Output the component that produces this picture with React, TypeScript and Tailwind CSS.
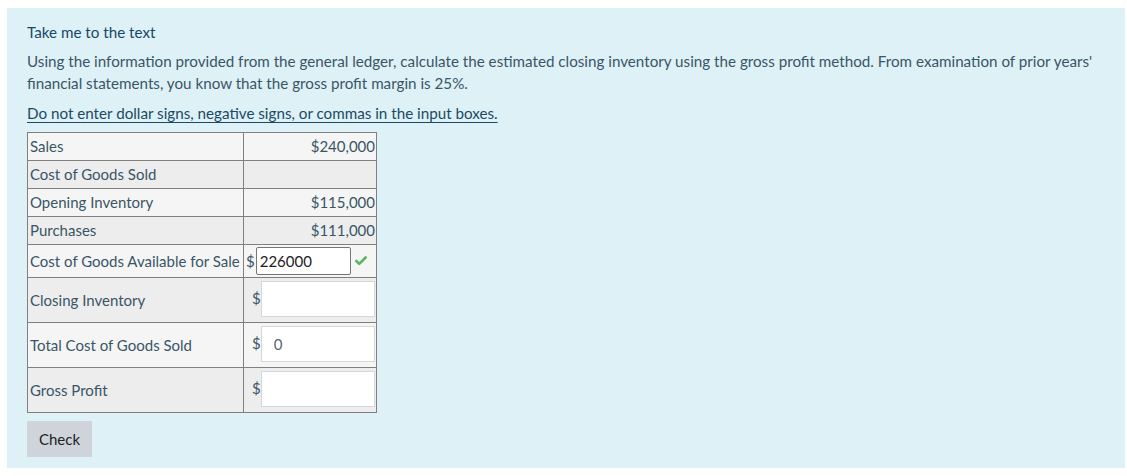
import { Check } from 'lucide-react'

const font = { fontFamily: '"Lato", "Open Sans", sans-serif' }

type Row = { label: string; value?: string; kind?: 'text' | 'filled' | 'input'; input?: string }

const rows: Row[] = [
  { label: 'Sales', value: '$240,000' },
  { label: 'Cost of Goods Sold', value: '' },
  { label: 'Opening Inventory', value: '$115,000' },
  { label: 'Purchases', value: '$111,000' },
  { label: 'Cost of Goods Available for Sale', kind: 'filled', input: '226000' },
  { label: 'Closing Inventory', kind: 'input', input: '' },
  { label: 'Total Cost of Goods Sold', kind: 'input', input: '0' },
  { label: 'Gross Profit', kind: 'input', input: '' },
]

function ValueCell({ row }: { row: Row }) {
  if (row.kind === 'filled') {
    return (
      <div className="flex items-center h-[32px] pl-[2px]">
        <span>$</span>
        <input
          readOnly
          value={row.input}
          className="ml-px w-[95px] h-[28px] border border-[#767676] rounded-[2px] bg-white px-[3px] text-[15px] text-[#1d2125] outline-none"
        />
        <Check className="ml-[3px] w-[14px] h-[14px] text-[#5cb85c]" strokeWidth={4.5} />
      </div>
    )
  }
  if (row.kind === 'input') {
    return (
      <div className="flex items-center h-[44px] pl-[8px] pb-[3px]">
        <span>$</span>
        <input
          readOnly
          value={row.input}
          className="w-[114px] h-[36px] border border-[#d4d8dc] bg-white px-[12px] text-[15px] text-[#5a6570] outline-none"
        />
      </div>
    )
  }
  return <div className="h-[27px] flex items-center justify-end pr-[1px]">{row.value}</div>
}

export default function App() {
  return (
    <div className="pt-2 pl-[7px] pr-[2px] bg-white h-[476px]" style={font}>
      <div className="bg-[#def1f7] h-[460px] pl-5 pt-[13px] text-[15.2px] text-[#3a5566]">
        <p className="leading-[22px] text-[#174766]">Take me to the text</p>
        <p className="mt-[7px] leading-[22px] pr-6">
          Using the information provided from the general ledger, calculate the estimated closing inventory using the gross profit method. From examination of prior years' financial statements, you know that the gross profit margin is 25%.
        </p>
        <p className="mt-[8px] leading-[22px] underline underline-offset-[3px] text-[#1a4a63]">
          Do not enter dollar signs, negative signs, or commas in the input boxes.
        </p>
        <table className="mt-[8px] border-collapse border border-[#808080] text-[#3a5566] text-[15px] table-fixed w-[349px]">
          <colgroup>
            <col className="w-[216px]" />
            <col className="w-[133px]" />
          </colgroup>
          <tbody>
            {rows.map((row, i) => (
              <tr key={row.label} className={i % 2 === 0 ? 'bg-[#f5f5f5]' : 'bg-[#ededed]'}>
                <td className="border border-[#808080] pl-[2px] pr-0 whitespace-nowrap align-middle overflow-visible">
                  {row.label}
                </td>
                <td className="border border-[#808080] p-0 align-middle whitespace-nowrap">
                  <ValueCell row={row} />
                </td>
              </tr>
            ))}
          </tbody>
        </table>
        <button
          type="button"
          className="block mt-[8px] w-[65px] h-[36px] bg-[#ced4da] text-[#1d2125] text-[15px]"
        >
          Check
        </button>
      </div>
    </div>
  )
}
